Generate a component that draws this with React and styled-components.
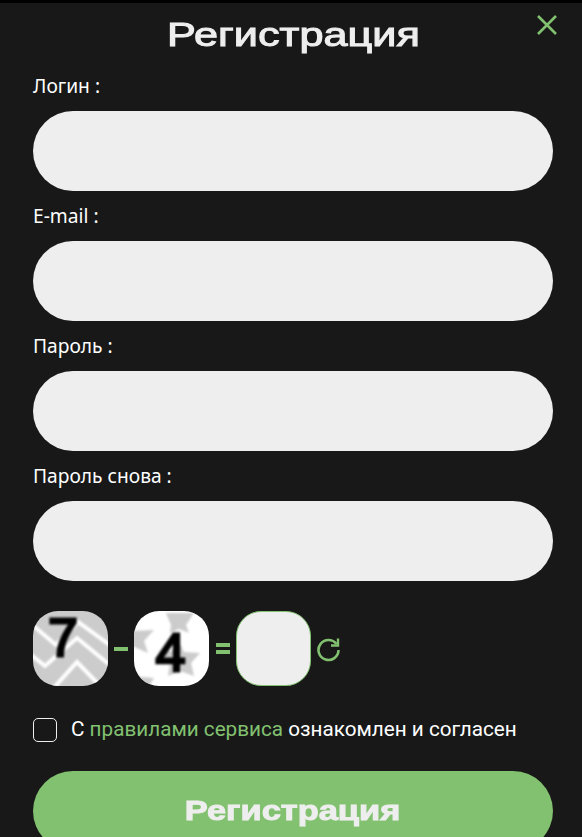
import React from "react";
import styled, { createGlobalStyle } from "styled-components";

const Global = createGlobalStyle`
  html, body { margin: 0; padding: 0; background: #181818; height: 100%; overflow: hidden; }
  #root { height: 837px; overflow: hidden; }
`;

const Page = styled.div`
  box-sizing: border-box;
  width: 582px;
  height: 837px;
  overflow: hidden;
  position: relative;
  background: #181818;
  border-top: 3px solid #000;
  padding: 0 29px 0 33px;
  font-family: "Noto Sans", sans-serif;
  color: #fff;
`;

const TitleRow = styled.div`
  height: 66px;
  display: flex;
  justify-content: center;
  align-items: center;
`;

const Title = styled.h1`
  margin: 0;
  font: 400 33px/40px "Liberation Sans", sans-serif;
  color: #eeeeee;
  transform: scaleX(1.31);
  -webkit-text-stroke: 1px #eeeeee;
  position: relative;
  top: -1px;
`;

const Close = styled.button`
  position: absolute;
  top: 11px;
  right: 24px;
  width: 22px;
  height: 22px;
  padding: 0;
  border: 0;
  background: none;
  display: block;
`;

const Field = styled.div`
  display: flex;
  flex-direction: column;
  height: 130px;
`;

const Label = styled.label`
  height: 42px;
  font-size: 19.2px;
  line-height: 34px;
  font-weight: 400;
  color: #fff;
`;

const Input = styled.input`
  box-sizing: border-box;
  width: 520px;
  height: 80px;
  border: 0;
  border-radius: 40px;
  background: #eeeeee;
  outline: none;
  display: block;
`;

const Captcha = styled.div`
  display: flex;
  align-items: center;
  height: 75px;
  margin-top: 22px;
`;

const CaptchaImage = styled.svg`
  width: 75px;
  height: 75px;
  border-radius: 25px;
  display: block;
  flex: none;
`;

const Blurred = styled.g`
  filter: blur(0.8px);
`;

const Digit = styled.text`
  font: 400 54px "Liberation Sans", sans-serif;
  fill: #000;
  stroke: #000;
  stroke-width: 2.8px;
  text-anchor: middle;
`;

const Chevron = styled.path`
  stroke: #fff;
  stroke-width: 4;
  fill: none;
`;

const Minus = styled.span`
  width: 26px;
  flex: none;
  display: flex;
  justify-content: center;
  &::before {
    content: "";
    width: 14px;
    height: 4px;
    background: #82c170;
  }
`;

const Equals = styled.span`
  width: 27px;
  flex: none;
  display: flex;
  flex-direction: column;
  align-items: center;
  gap: 3px;
  &::before,
  &::after {
    content: "";
    width: 14px;
    height: 4px;
    background: #82c170;
  }
`;

const Answer = styled.input`
  box-sizing: border-box;
  width: 75px;
  height: 75px;
  border: 1px solid #82c170;
  border-radius: 25px;
  background: #eeeeee;
  outline: none;
  flex: none;
`;

const Refresh = styled.svg`
  width: 26px;
  height: 26px;
  margin-left: 4px;
  flex: none;
`;

const Agree = styled.div`
  display: flex;
  align-items: center;
  gap: 14px;
  margin-top: 32px;
  height: 24px;
`;

const Box = styled.span`
  box-sizing: border-box;
  width: 24px;
  height: 24px;
  border: 1px solid #eeeeee;
  border-radius: 5px;
  flex: none;
`;

const AgreeText = styled.span`
  font: 400 20.7px/24px "Roboto", sans-serif;
  color: #fff;
  position: relative;
  top: -1px;
  white-space: nowrap;
`;

const RuleLink = styled.a`
  color: #82c170;
  text-decoration: none;
`;

const Submit = styled.button`
  display: flex;
  align-items: center;
  justify-content: center;
  width: 520px;
  height: 80px;
  margin-top: 29px;
  border: 0;
  border-radius: 40px;
  background: #82c170;
  padding: 0;
`;

const SubmitText = styled.span`
  font: 700 28px/34px "Liberation Sans", sans-serif;
  color: #eeeeee;
  display: inline-block;
  transform: scaleX(1.23);
  -webkit-text-stroke: 1px #eeeeee;
`;

export default function App() {
  const fields = ["Логин :", "E-mail :", "Пароль :", "Пароль снова :"];
  return (
    <Page>
      <Global />
      <TitleRow>
        <Title>Регистрация</Title>
      </TitleRow>
      <Close aria-label="Закрыть">
        <svg width="22" height="22" viewBox="0 0 22 22">
          <path d="M2 2 L20 20 M20 2 L2 20" stroke="#82c170" strokeWidth="2.6" fill="none" />
        </svg>
      </Close>
      {fields.map((f) => (
        <Field key={f}>
          <Label>{f}</Label>
          <Input />
        </Field>
      ))}
      <Captcha>
        <CaptchaImage viewBox="0 0 75 75">
          <rect width="75" height="75" fill="#cccccc" />
          <Blurred>
            <Chevron d="M-3 12 L23 34 L45 11 L78 35" />
            <Chevron d="M-3 43 L12 55 L44 27 L78 55" />
            <Chevron d="M18 80 L44 51 L72 80" />
            <Digit x="30" y="45">7</Digit>
          </Blurred>
        </CaptchaImage>
        <Minus />
        <CaptchaImage viewBox="0 0 75 75">
          <rect width="75" height="75" fill="#fff" />
          <Blurred>
            <path d="M32 2 L60 2 L52 14 L55 22 L45 18 L36 22 L37 14 Z" fill="#cccccc" />
            <path d="M44 28 L50 41 L66 42 L57 52 L60 65 L46 60 L34 65 L36 52 L28 42 L38 40 Z" fill="#cccccc" />
            <path d="M-2 20 L20 19 L10 30 L14 42 L-2 35 Z" fill="#cccccc" />
            <path d="M-2 65 L20 67 L14 77 L-2 77 Z" fill="#cccccc" />
            <Digit x="36.5" y="60">4</Digit>
          </Blurred>
        </CaptchaImage>
        <Equals />
        <Answer />
        <Refresh viewBox="0 0 26 26">
          <path d="M21.5 8 A10 10 0 1 0 23.5 14" stroke="#82c170" strokeWidth="2.6" fill="none" />
          <path d="M23 2.5 V9.5 H16" stroke="#82c170" strokeWidth="2.4" fill="none" />
        </Refresh>
      </Captcha>
      <Agree>
        <Box />
        <AgreeText>
          С <RuleLink>правилами сервиса</RuleLink> ознакомлен и согласен
        </AgreeText>
      </Agree>
      <Submit>
        <SubmitText>Регистрация</SubmitText>
      </Submit>
    </Page>
  );
}
